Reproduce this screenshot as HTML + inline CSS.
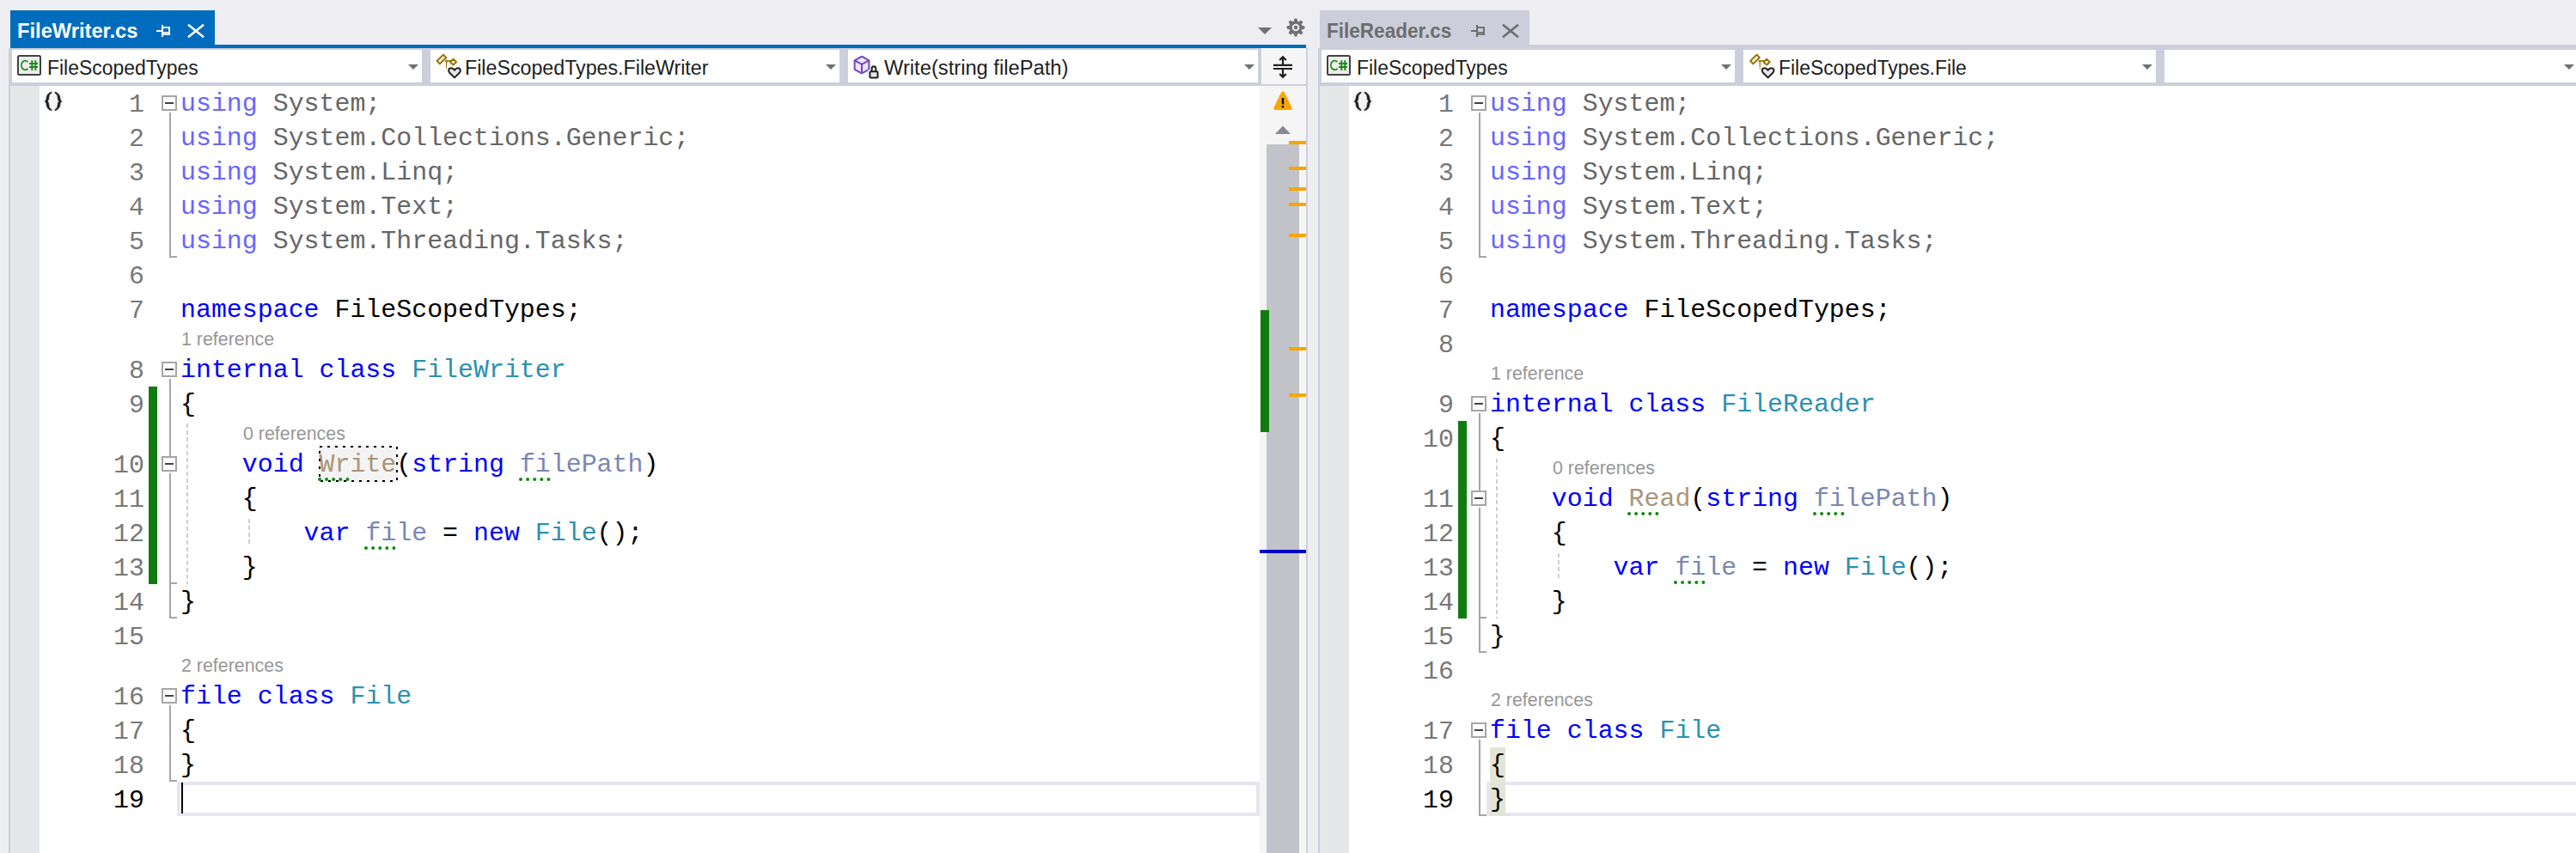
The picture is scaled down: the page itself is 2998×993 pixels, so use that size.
<!DOCTYPE html>
<html><head><meta charset="utf-8">
<style>
*{margin:0;padding:0;box-sizing:border-box}
html,body{width:2998px;height:993px;overflow:hidden;background:#EEEEF2}
body{position:relative;font-family:"Liberation Sans",sans-serif}
.a{position:absolute}
.code{position:absolute;font-family:"Liberation Mono",monospace;font-size:29.92px;line-height:40px;height:40px;white-space:pre;color:#000}
.ln{position:absolute;font-family:"Liberation Mono",monospace;font-size:29.92px;line-height:40px;height:40px;white-space:pre;color:#777;text-align:right;width:80px}
.cl{position:absolute;font-size:21.4px;line-height:30px;color:#979797;white-space:pre}
.dd{position:absolute;top:58px;height:38px;background:#fff}
.ddt{position:absolute;top:59.5px;transform-origin:0 0;line-height:38px;height:38px;font-size:23.5px;color:#1E1E1E;white-space:pre}
.tab{position:absolute;top:14px;transform-origin:0 0;line-height:44px;height:40px;font-size:24px;font-weight:bold;white-space:pre}
.k{color:#0000FF}.t{color:#2B91AF}
.fu{color:#6666FF}.fg{color:#666}
.m{color:#AB9478}.p{color:#7987B2}
</style></head><body>
<!-- LEFT PANEL -->
<div class="a" style="left:12px;top:12px;width:238px;height:44px;background:#006CBE;"></div>
<div class="a" style="left:12px;top:52px;width:1508px;height:4px;background:#006CBE;"></div>
<div class="a" style="left:10px;top:56px;width:1512px;height:937px;background:#CCCEDB;"></div>
<div class="a" style="left:12px;top:100px;width:1508px;height:893px;background:#fff;"></div>
<div class="a" style="left:12px;top:100px;width:34px;height:893px;background:#E6E7E8;"></div>
<div class="dd" style="left:14px;width:477px"></div>
<div class="dd" style="left:501px;width:476px"></div>
<div class="dd" style="left:987px;width:477px"></div>
<div class="a" style="left:1468px;top:56px;width:52px;height:42px;background:#F5F5F5;"></div>
<div class="a" style="left:1466px;top:100px;width:54px;height:893px;background:#F5F5F5;"></div>
<div class="tab" style="left:19.5px;color:#fff;transform:scaleX(0.987)">FileWriter.cs</div>
<div class="ddt" style="left:55px;transform:scaleX(0.975)">FileScopedTypes</div>
<div class="ddt" style="left:541.2px;transform:scaleX(0.988)">FileScopedTypes.FileWriter</div>
<div class="ddt" style="left:1028.7px;transform:scaleX(1.009)">Write(string filePath)</div>
<div class="a" style="left:206px;top:910px;width:1260px;height:40px;background:transparent;border:4px solid #E6E6F0;border-right-width:4px"></div>
<div class="a" style="left:371px;top:519px;width:92px;height:42px;background:#F3F3F3;"></div>
<div class="a" style="left:173px;top:450px;width:10px;height:230px;background:#107C10;"></div>
<div class="ln" style="left:88px;top:102px;color:#777">1</div>
<div class="code" style="left:210px;top:101px"><span class="fu">using</span> <span class="fg">System;</span></div>
<div class="ln" style="left:88px;top:142px;color:#777">2</div>
<div class="code" style="left:210px;top:141px"><span class="fu">using</span> <span class="fg">System.Collections.Generic;</span></div>
<div class="ln" style="left:88px;top:182px;color:#777">3</div>
<div class="code" style="left:210px;top:181px"><span class="fu">using</span> <span class="fg">System.Linq;</span></div>
<div class="ln" style="left:88px;top:222px;color:#777">4</div>
<div class="code" style="left:210px;top:221px"><span class="fu">using</span> <span class="fg">System.Text;</span></div>
<div class="ln" style="left:88px;top:262px;color:#777">5</div>
<div class="code" style="left:210px;top:261px"><span class="fu">using</span> <span class="fg">System.Threading.Tasks;</span></div>
<div class="ln" style="left:88px;top:302px;color:#777">6</div>
<div class="ln" style="left:88px;top:342px;color:#777">7</div>
<div class="code" style="left:210px;top:341px"><span class="k">namespace</span> FileScopedTypes;</div>
<div class="ln" style="left:88px;top:412px;color:#777">8</div>
<div class="code" style="left:210px;top:411px"><span class="k">internal</span> <span class="k">class</span> <span class="t">FileWriter</span></div>
<div class="ln" style="left:88px;top:452px;color:#777">9</div>
<div class="code" style="left:210px;top:451px">{</div>
<div class="ln" style="left:88px;top:522px;color:#777">10</div>
<div class="code" style="left:210px;top:521px">    <span class="k">void</span> <span class="m">Write</span>(<span class="k">string</span> <span class="p">filePath</span>)</div>
<div class="ln" style="left:88px;top:562px;color:#777">11</div>
<div class="code" style="left:210px;top:561px">    {</div>
<div class="ln" style="left:88px;top:602px;color:#777">12</div>
<div class="code" style="left:210px;top:601px">        <span class="k">var</span> <span class="p">file</span> = <span class="k">new</span> <span class="t">File</span>();</div>
<div class="ln" style="left:88px;top:642px;color:#777">13</div>
<div class="code" style="left:210px;top:641px">    }</div>
<div class="ln" style="left:88px;top:682px;color:#777">14</div>
<div class="code" style="left:210px;top:681px">}</div>
<div class="ln" style="left:88px;top:722px;color:#777">15</div>
<div class="ln" style="left:88px;top:792px;color:#777">16</div>
<div class="code" style="left:210px;top:791px"><span class="k">file</span> <span class="k">class</span> <span class="t">File</span></div>
<div class="ln" style="left:88px;top:832px;color:#777">17</div>
<div class="code" style="left:210px;top:831px">{</div>
<div class="ln" style="left:88px;top:872px;color:#777">18</div>
<div class="code" style="left:210px;top:871px">}</div>
<div class="ln" style="left:88px;top:912px;color:#000">19</div>
<div class="cl" style="left:211px;top:380px">1 reference</div>
<div class="cl" style="left:283px;top:490px">0 references</div>
<div class="cl" style="left:211px;top:760px">2 references</div>
<div class="a" style="left:211px;top:911px;width:2px;height:36px;background:#000;"></div>
<!-- RIGHT PANEL -->
<div class="a" style="left:1536px;top:12px;width:244px;height:44px;background:#CCCEDB;"></div>
<div class="a" style="left:1536px;top:52px;width:1462px;height:941px;background:#CCCEDB;"></div>
<div class="a" style="left:1534px;top:56px;width:2px;height:937px;background:#CCCEDB;"></div>
<div class="a" style="left:1536px;top:100px;width:1462px;height:893px;background:#fff;"></div>
<div class="a" style="left:1536px;top:100px;width:34px;height:893px;background:#E6E7E8;"></div>
<div class="dd" style="left:1538px;width:481px"></div>
<div class="dd" style="left:2029px;width:480px"></div>
<div class="dd" style="left:2519px;width:479px"></div>
<div class="tab" style="left:1544.4px;color:#6D6D6D;transform:scaleX(0.939)">FileReader.cs</div>
<div class="ddt" style="left:1579px;transform:scaleX(0.975)">FileScopedTypes</div>
<div class="ddt" style="left:2069.5px;transform:scaleX(0.974)">FileScopedTypes.File</div>
<div class="a" style="left:1730px;top:910px;width:1268px;height:40px;background:transparent;border:4px solid #E6E6F0;border-right:none"></div>
<div class="a" style="left:1734px;top:870px;width:18px;height:80px;background:#E2E5D6;"></div>
<div class="a" style="left:1697px;top:490px;width:10px;height:230px;background:#107C10;"></div>
<div class="ln" style="left:1612px;top:102px;color:#777">1</div>
<div class="code" style="left:1734px;top:101px"><span class="fu">using</span> <span class="fg">System;</span></div>
<div class="ln" style="left:1612px;top:142px;color:#777">2</div>
<div class="code" style="left:1734px;top:141px"><span class="fu">using</span> <span class="fg">System.Collections.Generic;</span></div>
<div class="ln" style="left:1612px;top:182px;color:#777">3</div>
<div class="code" style="left:1734px;top:181px"><span class="fu">using</span> <span class="fg">System.Linq;</span></div>
<div class="ln" style="left:1612px;top:222px;color:#777">4</div>
<div class="code" style="left:1734px;top:221px"><span class="fu">using</span> <span class="fg">System.Text;</span></div>
<div class="ln" style="left:1612px;top:262px;color:#777">5</div>
<div class="code" style="left:1734px;top:261px"><span class="fu">using</span> <span class="fg">System.Threading.Tasks;</span></div>
<div class="ln" style="left:1612px;top:302px;color:#777">6</div>
<div class="ln" style="left:1612px;top:342px;color:#777">7</div>
<div class="code" style="left:1734px;top:341px"><span class="k">namespace</span> FileScopedTypes;</div>
<div class="ln" style="left:1612px;top:382px;color:#777">8</div>
<div class="ln" style="left:1612px;top:452px;color:#777">9</div>
<div class="code" style="left:1734px;top:451px"><span class="k">internal</span> <span class="k">class</span> <span class="t">FileReader</span></div>
<div class="ln" style="left:1612px;top:492px;color:#777">10</div>
<div class="code" style="left:1734px;top:491px">{</div>
<div class="ln" style="left:1612px;top:562px;color:#777">11</div>
<div class="code" style="left:1734px;top:561px">    <span class="k">void</span> <span class="m">Read</span>(<span class="k">string</span> <span class="p">filePath</span>)</div>
<div class="ln" style="left:1612px;top:602px;color:#777">12</div>
<div class="code" style="left:1734px;top:601px">    {</div>
<div class="ln" style="left:1612px;top:642px;color:#777">13</div>
<div class="code" style="left:1734px;top:641px">        <span class="k">var</span> <span class="p">file</span> = <span class="k">new</span> <span class="t">File</span>();</div>
<div class="ln" style="left:1612px;top:682px;color:#777">14</div>
<div class="code" style="left:1734px;top:681px">    }</div>
<div class="ln" style="left:1612px;top:722px;color:#777">15</div>
<div class="code" style="left:1734px;top:721px">}</div>
<div class="ln" style="left:1612px;top:762px;color:#777">16</div>
<div class="ln" style="left:1612px;top:832px;color:#777">17</div>
<div class="code" style="left:1734px;top:831px"><span class="k">file</span> <span class="k">class</span> <span class="t">File</span></div>
<div class="ln" style="left:1612px;top:872px;color:#777">18</div>
<div class="code" style="left:1734px;top:871px">{</div>
<div class="ln" style="left:1612px;top:912px;color:#000">19</div>
<div class="code" style="left:1734px;top:911px">}</div>
<div class="cl" style="left:1735px;top:420px">1 reference</div>
<div class="cl" style="left:1807px;top:530px">0 references</div>
<div class="cl" style="left:1735px;top:800px">2 references</div>
<svg class="a" style="left:0;top:0" width="2998" height="993" viewBox="0 0 2998 993">
<g transform="translate(0,0)"><rect x="182" y="35" width="6" height="2" fill="#fff"/><rect x="188" y="29" width="2" height="14" fill="#fff"/><rect x="190" y="31" width="8" height="2" fill="#fff"/><rect x="196" y="31" width="2" height="10" fill="#fff"/><rect x="190" y="37" width="6" height="4" fill="#fff" opacity="0.85"/></g>
<path d="M219 28.8 L237 43.2 M237 28.8 L219 43.2" stroke="#fff" stroke-width="2.6" fill="none"/>
<path d="M1464 32 L1480 32 L1472.0 40 Z" fill="#717171"/>
<polygon points="1505.75,26.01 1507.11,22.14 1508.89,22.14 1510.25,26.01 1510.64,26.17 1514.34,24.40 1515.60,25.66 1513.83,29.36 1513.99,29.75 1517.86,31.11 1517.86,32.89 1513.99,34.25 1513.83,34.64 1515.60,38.34 1514.34,39.60 1510.64,37.83 1510.25,37.99 1508.89,41.86 1507.11,41.86 1505.75,37.99 1505.36,37.83 1501.66,39.60 1500.40,38.34 1502.17,34.64 1502.01,34.25 1498.14,32.89 1498.14,31.11 1502.01,29.75 1502.17,29.36 1500.40,25.66 1501.66,24.40 1505.36,26.17" fill="#717171" stroke="#717171" stroke-width="1.2" stroke-linejoin="round"/>
<circle cx="1508" cy="32" r="7" fill="#717171"/>
<circle cx="1508" cy="32" r="4.3" fill="#EEEEF2"/>
<circle cx="1508" cy="32" r="2.3" fill="#717171"/>
<g transform="translate(20,64)"><rect x="1" y="1" width="26" height="22" rx="1.5" fill="#EDEDED" stroke="#424242" stroke-width="2"/><path d="M12.4 8.1 A4.5 5.3 0 1 0 12.4 15.9" fill="none" stroke="#1E8A1E" stroke-width="1.8"/><path d="M17.3 6.2 V18 M21.3 6.2 V18 M14 10 H24 M14 14 H24" fill="none" stroke="#1E8A1E" stroke-width="2"/></g>
<g transform="translate(0,0)"><path d="M508.5 70.9 L516 63.6 L519.3 67.1 L511.8 74.4 Z" fill="#F1EBDC" stroke="#996F00" stroke-width="2" stroke-linejoin="round"/><path d="M518 70.9 H525" fill="none" stroke="#996F00" stroke-width="1.7"/><path d="M518.8 70.9 H520.4 L519.9 80.8 H519.3 Z" fill="#996F00"/><path d="M523.9 72.3 L527.5 68.8 L531.2 72.1 L527.6 75.6 Z" fill="#F1EBDC" stroke="#996F00" stroke-width="1.9" stroke-linejoin="round"/><path d="M529 90.4 L523.3 84.8 C521.2 82.7 522 79.3 525 79.3 C526.8 79.3 528.2 80.3 529 81.7 C529.8 80.3 531.2 79.3 533 79.3 C536 79.3 536.8 82.7 534.7 84.8 Z" fill="#E6E6E6" stroke="#1E1E1E" stroke-width="2" stroke-linejoin="round"/></g>
<g transform="translate(0,0)"><path d="M1003 65.7 L994.6 70.3 L994.6 80.8 L1003 85.3 L1011.4 80.8 L1011.4 70.3 Z" fill="#EDE6F7" stroke="#7446C4" stroke-width="2" stroke-linejoin="round"/><path d="M994.6 70.3 L1003 74.8 L1011.4 70.3 M1003 74.8 V85.3" fill="none" stroke="#7446C4" stroke-width="2"/><rect x="1010.4" y="81.3" width="13.1" height="11.1" fill="#fff"/><path d="M1014.6 83 V79.7 A2.35 2.5 0 0 1 1019.3 79.7 V83" fill="none" stroke="#1E1E1E" stroke-width="2"/><rect x="1012.4" y="83.3" width="9.1" height="7.1" rx="1" fill="#E6E6E6" stroke="#1E1E1E" stroke-width="2"/></g>
<path d="M475 75 L487 75 L481.0 81 Z" fill="#717171"/>
<path d="M961 75 L973 75 L967.0 81 Z" fill="#717171"/>
<path d="M1448 75 L1460 75 L1454.0 81 Z" fill="#717171"/>
<g fill="none" stroke="#1E1E1E" stroke-width="2.2"><path d="M1482 75.8 H1504 M1482 80 H1504"/><path d="M1493 66 V75 M1489.2 70 L1493 66.2 L1496.8 70"/><path d="M1493 81 V90 M1489.2 86 L1493 89.8 L1496.8 86"/></g>
<path d="M1493 106.5 C1494 106.5 1494.6 107.2 1495.2 108.2 L1503.4 125 C1504.2 126.6 1503.6 128 1501.8 128 L1484.2 128 C1482.4 128 1481.8 126.6 1482.6 125 L1490.8 108.2 C1491.4 107.2 1492 106.5 1493 106.5 Z" fill="#F7A600"/>
<rect x="1491.8" y="114" width="2.4" height="7.5" fill="#111"/>
<rect x="1491.8" y="123" width="2.4" height="2.4" fill="#111"/>
<path d="M1484 156 L1502 156 L1493 146.4 Z" fill="#868999"/>
<rect x="1474" y="168" width="38" height="825" fill="#C2C3C9"/>
<rect x="1500" y="164" width="20" height="4" fill="#F7A600"/>
<rect x="1500" y="194" width="20" height="4" fill="#F7A600"/>
<rect x="1500" y="218" width="20" height="4" fill="#F7A600"/>
<rect x="1500" y="236" width="20" height="4" fill="#F7A600"/>
<rect x="1500" y="272" width="20" height="4" fill="#F7A600"/>
<rect x="1500" y="404" width="20" height="4" fill="#F7A600"/>
<rect x="1500" y="458" width="20" height="4" fill="#F7A600"/>
<rect x="1467" y="361" width="10" height="142" fill="#107C10"/>
<rect x="1466" y="640" width="54" height="4" fill="#0000CD"/>
<rect x="372" y="520" width="90" height="40" fill="none" stroke="#000" stroke-width="2" stroke-dasharray="3 6"/>
<g transform="translate(0,0)"><ellipse cx="62" cy="118" rx="11.5" ry="13" fill="#F4F4F4"/><path d="M60.0 107.0 C56.5 108.0 54.2 110.5 54.0 114.5 C53.9 116.3 53.3 117.2 52.0 117.9 C53.3 118.6 53.9 119.5 54.0 121.3 C54.2 125.3 56.5 127.8 60.0 128.8 L60.0 127.4 C57.8 126.6 56.9 124.5 56.8 121.5 C56.7 119.6 56.2 118.5 55.2 117.9 C56.2 117.3 56.7 116.2 56.8 114.3 C56.9 111.3 57.8 109.2 60.0 108.4 Z" fill="#1E1E1E" stroke="#1E1E1E" stroke-width="0.6"/><path d="M64.0 107.0 C67.5 108.0 69.8 110.5 70.0 114.5 C70.1 116.3 70.7 117.2 72.0 117.9 C70.7 118.6 70.1 119.5 70.0 121.3 C69.8 125.3 67.5 127.8 64.0 128.8 L64.0 127.4 C66.2 126.6 67.1 124.5 67.2 121.5 C67.3 119.6 67.8 118.5 68.8 117.9 C67.8 117.3 67.3 116.2 67.2 114.3 C67.1 111.3 66.2 109.2 64.0 108.4 Z" fill="#1E1E1E" stroke="#1E1E1E" stroke-width="0.6"/></g>
<rect x="197" y="131" width="2" height="169" fill="#A5A5A5"/>
<rect x="197" y="298" width="9" height="2" fill="#A5A5A5"/>
<rect x="189" y="112" width="16" height="16" fill="#fff" stroke="#A5A5A5" stroke-width="2"/>
<rect x="192" y="119" width="10" height="2" fill="#424242"/>
<rect x="197" y="441" width="2" height="90" fill="#A5A5A5"/>
<rect x="189" y="422" width="16" height="16" fill="#fff" stroke="#A5A5A5" stroke-width="2"/>
<rect x="192" y="429" width="10" height="2" fill="#424242"/>
<rect x="197" y="551" width="2" height="169" fill="#A5A5A5"/>
<rect x="189" y="532" width="16" height="16" fill="#fff" stroke="#A5A5A5" stroke-width="2"/>
<rect x="192" y="539" width="10" height="2" fill="#424242"/>
<rect x="197" y="678" width="9" height="2" fill="#A5A5A5"/>
<rect x="197" y="718" width="9" height="2" fill="#A5A5A5"/>
<rect x="197" y="821" width="2" height="89" fill="#A5A5A5"/>
<rect x="197" y="908" width="9" height="2" fill="#A5A5A5"/>
<rect x="189" y="802" width="16" height="16" fill="#fff" stroke="#A5A5A5" stroke-width="2"/>
<rect x="192" y="809" width="10" height="2" fill="#424242"/>
<rect x="217" y="493" width="2" height="5" fill="#D0D0D0"/>
<rect x="217" y="501" width="2" height="5" fill="#D0D0D0"/>
<rect x="217" y="509" width="2" height="5" fill="#D0D0D0"/>
<rect x="217" y="517" width="2" height="5" fill="#D0D0D0"/>
<rect x="217" y="525" width="2" height="5" fill="#D0D0D0"/>
<rect x="217" y="533" width="2" height="5" fill="#D0D0D0"/>
<rect x="217" y="541" width="2" height="5" fill="#D0D0D0"/>
<rect x="217" y="549" width="2" height="5" fill="#D0D0D0"/>
<rect x="217" y="557" width="2" height="5" fill="#D0D0D0"/>
<rect x="217" y="565" width="2" height="5" fill="#D0D0D0"/>
<rect x="217" y="573" width="2" height="5" fill="#D0D0D0"/>
<rect x="217" y="581" width="2" height="5" fill="#D0D0D0"/>
<rect x="217" y="589" width="2" height="5" fill="#D0D0D0"/>
<rect x="217" y="597" width="2" height="5" fill="#D0D0D0"/>
<rect x="217" y="605" width="2" height="5" fill="#D0D0D0"/>
<rect x="217" y="613" width="2" height="5" fill="#D0D0D0"/>
<rect x="217" y="621" width="2" height="5" fill="#D0D0D0"/>
<rect x="217" y="629" width="2" height="5" fill="#D0D0D0"/>
<rect x="217" y="637" width="2" height="5" fill="#D0D0D0"/>
<rect x="217" y="645" width="2" height="5" fill="#D0D0D0"/>
<rect x="217" y="653" width="2" height="5" fill="#D0D0D0"/>
<rect x="217" y="661" width="2" height="5" fill="#D0D0D0"/>
<rect x="217" y="669" width="2" height="5" fill="#D0D0D0"/>
<rect x="217" y="677" width="2" height="3" fill="#D0D0D0"/>
<rect x="289" y="604" width="2" height="5" fill="#D0D0D0"/>
<rect x="289" y="612" width="2" height="5" fill="#D0D0D0"/>
<rect x="289" y="620" width="2" height="5" fill="#D0D0D0"/>
<rect x="289" y="628" width="2" height="5" fill="#D0D0D0"/>
<circle cx="372.0" cy="558" r="2" fill="#108A10"/>
<circle cx="380.1" cy="558" r="2" fill="#108A10"/>
<circle cx="388.2" cy="558" r="2" fill="#108A10"/>
<circle cx="396.3" cy="558" r="2" fill="#108A10"/>
<circle cx="404.4" cy="558" r="2" fill="#108A10"/>
<circle cx="606.0" cy="558" r="2" fill="#108A10"/>
<circle cx="614.1" cy="558" r="2" fill="#108A10"/>
<circle cx="622.2" cy="558" r="2" fill="#108A10"/>
<circle cx="630.3" cy="558" r="2" fill="#108A10"/>
<circle cx="638.4" cy="558" r="2" fill="#108A10"/>
<circle cx="426.0" cy="638" r="2" fill="#108A10"/>
<circle cx="434.1" cy="638" r="2" fill="#108A10"/>
<circle cx="442.2" cy="638" r="2" fill="#108A10"/>
<circle cx="450.3" cy="638" r="2" fill="#108A10"/>
<circle cx="458.4" cy="638" r="2" fill="#108A10"/>
<g transform="translate(1530,0)"><rect x="182" y="35" width="6" height="2" fill="#6D6D6D"/><rect x="188" y="29" width="2" height="14" fill="#6D6D6D"/><rect x="190" y="31" width="8" height="2" fill="#6D6D6D"/><rect x="196" y="31" width="2" height="10" fill="#6D6D6D"/><rect x="190" y="37" width="6" height="4" fill="#6D6D6D" opacity="0.85"/></g>
<path d="M1749 28.8 L1767 43.2 M1767 28.8 L1749 43.2" stroke="#6D6D6D" stroke-width="2.6" fill="none"/>
<g transform="translate(1544,64)"><rect x="1" y="1" width="26" height="22" rx="1.5" fill="#EDEDED" stroke="#424242" stroke-width="2"/><path d="M12.4 8.1 A4.5 5.3 0 1 0 12.4 15.9" fill="none" stroke="#1E8A1E" stroke-width="1.8"/><path d="M17.3 6.2 V18 M21.3 6.2 V18 M14 10 H24 M14 14 H24" fill="none" stroke="#1E8A1E" stroke-width="2"/></g>
<g transform="translate(1528.6,0)"><path d="M508.5 70.9 L516 63.6 L519.3 67.1 L511.8 74.4 Z" fill="#F1EBDC" stroke="#996F00" stroke-width="2" stroke-linejoin="round"/><path d="M518 70.9 H525" fill="none" stroke="#996F00" stroke-width="1.7"/><path d="M518.8 70.9 H520.4 L519.9 80.8 H519.3 Z" fill="#996F00"/><path d="M523.9 72.3 L527.5 68.8 L531.2 72.1 L527.6 75.6 Z" fill="#F1EBDC" stroke="#996F00" stroke-width="1.9" stroke-linejoin="round"/><path d="M529 90.4 L523.3 84.8 C521.2 82.7 522 79.3 525 79.3 C526.8 79.3 528.2 80.3 529 81.7 C529.8 80.3 531.2 79.3 533 79.3 C536 79.3 536.8 82.7 534.7 84.8 Z" fill="#E6E6E6" stroke="#1E1E1E" stroke-width="2" stroke-linejoin="round"/></g>
<path d="M2003 75 L2015 75 L2009.0 81 Z" fill="#717171"/>
<path d="M2493 75 L2505 75 L2499.0 81 Z" fill="#717171"/>
<path d="M2984 75 L2996 75 L2990.0 81 Z" fill="#717171"/>
<g transform="translate(1524,0)"><ellipse cx="62" cy="118" rx="11.5" ry="13" fill="#F4F4F4"/><path d="M60.0 107.0 C56.5 108.0 54.2 110.5 54.0 114.5 C53.9 116.3 53.3 117.2 52.0 117.9 C53.3 118.6 53.9 119.5 54.0 121.3 C54.2 125.3 56.5 127.8 60.0 128.8 L60.0 127.4 C57.8 126.6 56.9 124.5 56.8 121.5 C56.7 119.6 56.2 118.5 55.2 117.9 C56.2 117.3 56.7 116.2 56.8 114.3 C56.9 111.3 57.8 109.2 60.0 108.4 Z" fill="#1E1E1E" stroke="#1E1E1E" stroke-width="0.6"/><path d="M64.0 107.0 C67.5 108.0 69.8 110.5 70.0 114.5 C70.1 116.3 70.7 117.2 72.0 117.9 C70.7 118.6 70.1 119.5 70.0 121.3 C69.8 125.3 67.5 127.8 64.0 128.8 L64.0 127.4 C66.2 126.6 67.1 124.5 67.2 121.5 C67.3 119.6 67.8 118.5 68.8 117.9 C67.8 117.3 67.3 116.2 67.2 114.3 C67.1 111.3 66.2 109.2 64.0 108.4 Z" fill="#1E1E1E" stroke="#1E1E1E" stroke-width="0.6"/></g>
<rect x="1721" y="131" width="2" height="169" fill="#A5A5A5"/>
<rect x="1721" y="298" width="9" height="2" fill="#A5A5A5"/>
<rect x="1713" y="112" width="16" height="16" fill="#fff" stroke="#A5A5A5" stroke-width="2"/>
<rect x="1716" y="119" width="10" height="2" fill="#424242"/>
<rect x="1721" y="481" width="2" height="90" fill="#A5A5A5"/>
<rect x="1713" y="462" width="16" height="16" fill="#fff" stroke="#A5A5A5" stroke-width="2"/>
<rect x="1716" y="469" width="10" height="2" fill="#424242"/>
<rect x="1721" y="591" width="2" height="169" fill="#A5A5A5"/>
<rect x="1713" y="572" width="16" height="16" fill="#fff" stroke="#A5A5A5" stroke-width="2"/>
<rect x="1716" y="579" width="10" height="2" fill="#424242"/>
<rect x="1721" y="718" width="9" height="2" fill="#A5A5A5"/>
<rect x="1721" y="758" width="9" height="2" fill="#A5A5A5"/>
<rect x="1721" y="861" width="2" height="89" fill="#A5A5A5"/>
<rect x="1721" y="948" width="9" height="2" fill="#A5A5A5"/>
<rect x="1713" y="842" width="16" height="16" fill="#fff" stroke="#A5A5A5" stroke-width="2"/>
<rect x="1716" y="849" width="10" height="2" fill="#424242"/>
<rect x="1741" y="534" width="2" height="5" fill="#D0D0D0"/>
<rect x="1741" y="542" width="2" height="5" fill="#D0D0D0"/>
<rect x="1741" y="550" width="2" height="5" fill="#D0D0D0"/>
<rect x="1741" y="558" width="2" height="5" fill="#D0D0D0"/>
<rect x="1741" y="566" width="2" height="5" fill="#D0D0D0"/>
<rect x="1741" y="574" width="2" height="5" fill="#D0D0D0"/>
<rect x="1741" y="582" width="2" height="5" fill="#D0D0D0"/>
<rect x="1741" y="590" width="2" height="5" fill="#D0D0D0"/>
<rect x="1741" y="598" width="2" height="5" fill="#D0D0D0"/>
<rect x="1741" y="606" width="2" height="5" fill="#D0D0D0"/>
<rect x="1741" y="614" width="2" height="5" fill="#D0D0D0"/>
<rect x="1741" y="622" width="2" height="5" fill="#D0D0D0"/>
<rect x="1741" y="630" width="2" height="5" fill="#D0D0D0"/>
<rect x="1741" y="638" width="2" height="5" fill="#D0D0D0"/>
<rect x="1741" y="646" width="2" height="5" fill="#D0D0D0"/>
<rect x="1741" y="654" width="2" height="5" fill="#D0D0D0"/>
<rect x="1741" y="662" width="2" height="5" fill="#D0D0D0"/>
<rect x="1741" y="670" width="2" height="5" fill="#D0D0D0"/>
<rect x="1741" y="678" width="2" height="5" fill="#D0D0D0"/>
<rect x="1741" y="686" width="2" height="5" fill="#D0D0D0"/>
<rect x="1741" y="694" width="2" height="5" fill="#D0D0D0"/>
<rect x="1741" y="702" width="2" height="5" fill="#D0D0D0"/>
<rect x="1741" y="710" width="2" height="5" fill="#D0D0D0"/>
<rect x="1741" y="718" width="2" height="2" fill="#D0D0D0"/>
<rect x="1813" y="644" width="2" height="5" fill="#D0D0D0"/>
<rect x="1813" y="652" width="2" height="5" fill="#D0D0D0"/>
<rect x="1813" y="660" width="2" height="5" fill="#D0D0D0"/>
<rect x="1813" y="668" width="2" height="5" fill="#D0D0D0"/>
<circle cx="1896.0" cy="598" r="2" fill="#108A10"/>
<circle cx="1904.1" cy="598" r="2" fill="#108A10"/>
<circle cx="1912.2" cy="598" r="2" fill="#108A10"/>
<circle cx="1920.3" cy="598" r="2" fill="#108A10"/>
<circle cx="1928.4" cy="598" r="2" fill="#108A10"/>
<circle cx="2112.0" cy="598" r="2" fill="#108A10"/>
<circle cx="2120.1" cy="598" r="2" fill="#108A10"/>
<circle cx="2128.2" cy="598" r="2" fill="#108A10"/>
<circle cx="2136.3" cy="598" r="2" fill="#108A10"/>
<circle cx="2144.4" cy="598" r="2" fill="#108A10"/>
<circle cx="1950.0" cy="678" r="2" fill="#108A10"/>
<circle cx="1958.1" cy="678" r="2" fill="#108A10"/>
<circle cx="1966.2" cy="678" r="2" fill="#108A10"/>
<circle cx="1974.3" cy="678" r="2" fill="#108A10"/>
<circle cx="1982.4" cy="678" r="2" fill="#108A10"/>
</svg>
</body></html>
